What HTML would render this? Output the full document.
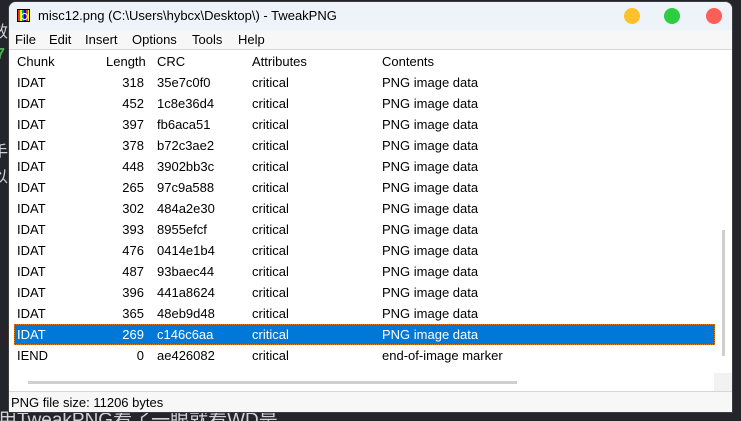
<!DOCTYPE html>
<html><head><meta charset="utf-8"><style>
*{margin:0;padding:0;box-sizing:border-box}
html,body{width:741px;height:421px;overflow:hidden}
body{background:#23252a;position:relative;font-family:"Liberation Sans","Noto Sans CJK SC",sans-serif;font-size:13px;color:#000}
.bgtxt{position:absolute;color:#cfd2d6;font-family:"Liberation Sans","Noto Sans CJK SC",sans-serif;white-space:nowrap}
.win{position:absolute;left:8px;top:1px;width:725px;height:412px;background:#fff;border-radius:8px 8px 0 0;overflow:hidden;border:1px solid #3a3c40}
.title{position:absolute;left:0;top:0;width:100%;height:28px;background:#eef2f9}
.title .t{position:absolute;left:29px;top:6px;font-size:13px}
.icon{position:absolute;left:8px;top:7px;width:13px;height:13px;background:repeating-linear-gradient(90deg,#e33 0 2px,#ff0 2px 4px,#0a0 4px 6px,#00f 6px 8px),#000;border:1px solid #000}
.icon:after{content:"";position:absolute;left:3px;top:3px;width:5px;height:5px;border:1px solid #fff;border-radius:50%}
.dot{position:absolute;top:6px;width:16px;height:16px;border-radius:50%}
.menu{position:absolute;left:0;top:28px;width:100%;height:20px;background:#f7f7f7;border-bottom:1px solid #d6d6d6}
.menu span{position:absolute;top:2px}
.list{position:absolute;left:0;top:47px;width:100%}
.row{position:absolute;left:0;height:21px;width:100%;line-height:21px}
.row span{position:absolute;top:0}
.sel{background:#0078d7;color:#fff;left:5px!important;width:701px!important;outline:1px dotted #e07a1e;outline-offset:-1px}
.c1{left:8px}.c3{left:148px}.c4{left:243px}.c5{left:373px}
.status{position:absolute;left:0;top:389px;width:100%;height:23px;background:#f7f7f7;border-top:1px solid #d6d6d6}
</style></head><body>
<div class="bgtxt" style="left:-2px;top:405px;font-size:19px">用TweakPNG看了一眼就看WD是</div>
<div class="bgtxt" style="left:-8px;top:18px;font-size:16px">效</div>
<div class="bgtxt" style="left:-4px;top:46px;font-size:16px;color:#4caf50;font-weight:bold">7</div>
<div class="bgtxt" style="left:-8px;top:138px;font-size:16px">手</div>
<div class="bgtxt" style="left:-8px;top:163px;font-size:16px">以</div>
<div class="win">
 <div class="title"><div class="icon"></div><div class="t">misc12.png (C:\Users\hybcx\Desktop\) - TweakPNG</div>
  <div class="dot" style="left:615px;background:#fdc22b"></div>
  <div class="dot" style="left:655px;background:#2ccd41"></div>
  <div class="dot" style="left:697px;background:#fd5e57"></div>
 </div>
 <div class="menu"><span style="left:6px">File</span><span style="left:40px">Edit</span><span style="left:76px">Insert</span><span style="left:123px">Options</span><span style="left:183px">Tools</span><span style="left:229px">Help</span></div>
 <div class="list">
  <div class="row" style="top:2px"><span class="c1">Chunk</span><span style="left:97px">Length</span><span class="c3">CRC</span><span class="c4">Attributes</span><span class="c5">Contents</span></div>
  <div class="row" style="top:23px"><span class="c1">IDAT</span><span style="left:0;width:135px;text-align:right">318</span><span class="c3">35e7c0f0</span><span class="c4">critical</span><span class="c5">PNG image data</span></div>
  <div class="row" style="top:44px"><span class="c1">IDAT</span><span style="left:0;width:135px;text-align:right">452</span><span class="c3">1c8e36d4</span><span class="c4">critical</span><span class="c5">PNG image data</span></div>
  <div class="row" style="top:65px"><span class="c1">IDAT</span><span style="left:0;width:135px;text-align:right">397</span><span class="c3">fb6aca51</span><span class="c4">critical</span><span class="c5">PNG image data</span></div>
  <div class="row" style="top:86px"><span class="c1">IDAT</span><span style="left:0;width:135px;text-align:right">378</span><span class="c3">b72c3ae2</span><span class="c4">critical</span><span class="c5">PNG image data</span></div>
  <div class="row" style="top:107px"><span class="c1">IDAT</span><span style="left:0;width:135px;text-align:right">448</span><span class="c3">3902bb3c</span><span class="c4">critical</span><span class="c5">PNG image data</span></div>
  <div class="row" style="top:128px"><span class="c1">IDAT</span><span style="left:0;width:135px;text-align:right">265</span><span class="c3">97c9a588</span><span class="c4">critical</span><span class="c5">PNG image data</span></div>
  <div class="row" style="top:149px"><span class="c1">IDAT</span><span style="left:0;width:135px;text-align:right">302</span><span class="c3">484a2e30</span><span class="c4">critical</span><span class="c5">PNG image data</span></div>
  <div class="row" style="top:170px"><span class="c1">IDAT</span><span style="left:0;width:135px;text-align:right">393</span><span class="c3">8955efcf</span><span class="c4">critical</span><span class="c5">PNG image data</span></div>
  <div class="row" style="top:191px"><span class="c1">IDAT</span><span style="left:0;width:135px;text-align:right">476</span><span class="c3">0414e1b4</span><span class="c4">critical</span><span class="c5">PNG image data</span></div>
  <div class="row" style="top:212px"><span class="c1">IDAT</span><span style="left:0;width:135px;text-align:right">487</span><span class="c3">93baec44</span><span class="c4">critical</span><span class="c5">PNG image data</span></div>
  <div class="row" style="top:233px"><span class="c1">IDAT</span><span style="left:0;width:135px;text-align:right">396</span><span class="c3">441a8624</span><span class="c4">critical</span><span class="c5">PNG image data</span></div>
  <div class="row" style="top:254px"><span class="c1">IDAT</span><span style="left:0;width:135px;text-align:right">365</span><span class="c3">48eb9d48</span><span class="c4">critical</span><span class="c5">PNG image data</span></div>
  <div class="row sel" style="top:275px"><span class="c1" style="left:3px">IDAT</span><span style="left:0;width:130px;text-align:right">269</span><span style="left:143px">c146c6aa</span><span style="left:238px">critical</span><span style="left:368px">PNG image data</span></div>
  <div class="row" style="top:296px"><span class="c1">IEND</span><span style="left:0;width:135px;text-align:right">0</span><span class="c3">ae426082</span><span class="c4">critical</span><span class="c5">end-of-image marker</span></div>
 </div>
 <div style="position:absolute;left:713px;top:228px;width:3px;height:126px;background:#cfcfcf"></div>
 <div style="position:absolute;left:19px;top:379px;width:489px;height:3px;background:#cfcfcf"></div>
 <div style="position:absolute;left:705px;top:371px;width:19px;height:18px;background:#f2f2f2"></div>
 <div class="status"><span style="position:absolute;left:2px;top:3px">PNG file size: 11206 bytes</span></div>
</div>
</body></html>
